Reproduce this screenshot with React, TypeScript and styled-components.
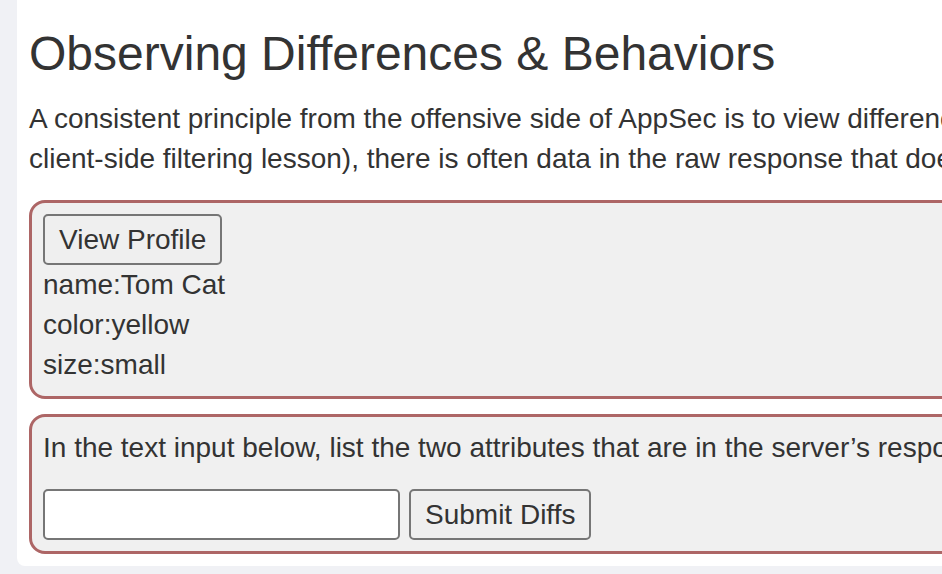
import React from "react";
import styled, { createGlobalStyle } from "styled-components";

const Global = createGlobalStyle`
  html, body {
    margin: 0;
    padding: 0;
    background: #f0f1f5;
    overflow: hidden;
  }
  body {
    font-family: "Liberation Sans", Arial, sans-serif;
    color: #333333;
  }
`;

const Page = styled.div`
  padding: 0 0 0 17px;
  width: 1400px;
`;

const Card = styled.main`
  margin-top: -10px;
  background: #ffffff;
  border-radius: 8px;
  padding: 37px 12px 12px 12px;
`;

const Title = styled.h1`
  margin: 0 0 19px 0;
  font-size: 48px;
  font-weight: 400;
  line-height: 53px;
  color: #333333;
`;

const Para = styled.p`
  margin: 0 0 21px 0;
  font-size: 28px;
  line-height: 40px;
  white-space: nowrap;
`;

const Box = styled.div<{ $gap?: number }>`
  border: 3px solid #ad6666;
  border-radius: 16px;
  background: #f0f0f0;
  padding: 11px 11px 11px 11px;
  margin-bottom: ${(p) => p.$gap ?? 0}px;
  font-size: 28px;
  line-height: 40px;
`;

const Button = styled.button`
  font-family: "Liberation Sans", Arial, sans-serif;
  font-size: 28px;
  line-height: 33px;
  color: #333333;
  background: #efefef;
  border: 2px solid #767676;
  border-radius: 5px;
  padding: 7px 14px;
  margin: 0;
  display: block;
`;

const Line = styled.div`
  white-space: nowrap;
`;

const Prompt = styled.p`
  margin: 0 0 21px 0;
  white-space: nowrap;
`;

const Form = styled.form`
  display: flex;
  gap: 9px;
  margin: 0;
`;

const Input = styled.input`
  box-sizing: border-box;
  width: 357px;
  height: 51px;
  border: 2px solid #767676;
  border-radius: 5px;
  background: #ffffff;
  font-size: 28px;
  font-family: "Liberation Sans", Arial, sans-serif;
  padding: 0 6px;
  margin: 0;
`;

export default function App() {
  return (
    <>
      <Global />
      <Page>
        <Card>
          <Title>Observing Differences &amp; Behaviors</Title>
          <Para>
            A consistent principle from the offensive side of AppSec is to view differences from the raw response to what is visible. In other words (as you may have already noted in the
            <br />
            client-side filtering lesson), there is often data in the raw response that doesn’t show up on the screen/page.
          </Para>
          <Box $gap={15}>
            <Button type="button">View Profile</Button>
            <Line>name:Tom Cat</Line>
            <Line>color:yellow</Line>
            <Line>size:small</Line>
          </Box>
          <Box>
            <Prompt>
              In the text input below, list the two attributes that are in the server’s response, but don’t show above in the profile.
            </Prompt>
            <Form onSubmit={(e) => e.preventDefault()}>
              <Input type="text" />
              <Button type="submit">Submit Diffs</Button>
            </Form>
          </Box>
        </Card>
      </Page>
    </>
  );
}
